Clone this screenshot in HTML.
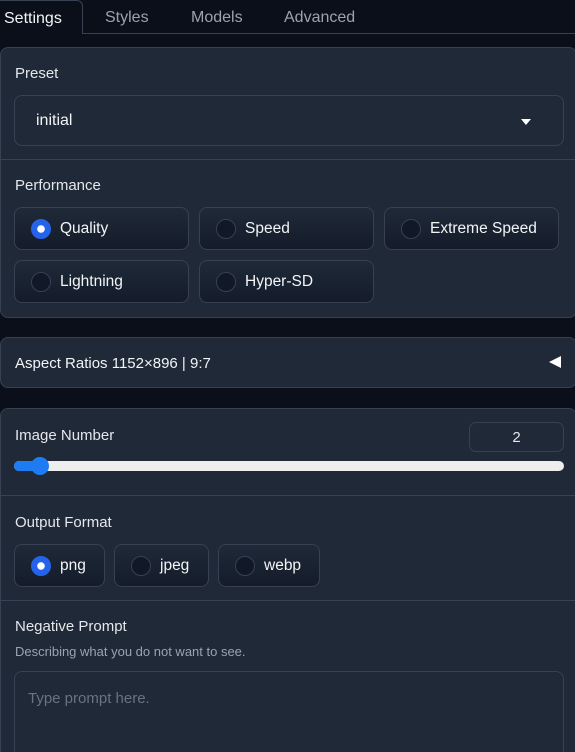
<!DOCTYPE html>
<html style="width:575px;height:752px;overflow:hidden"><head><style>
*{box-sizing:border-box;margin:0;padding:0}
body{width:575px;height:752px;overflow:hidden;background:#0b0f19;font-family:"Liberation Sans",sans-serif;color:#e5e7eb;position:relative}
.a{position:absolute}
.tab{top:0;height:34px;line-height:35px;font-size:16px;color:#9ca3af}
.panel{background:#1f2937;border:1px solid #374151;border-radius:8px}
.lbl{font-size:15px;color:#e5e7eb;margin-top:2px}
.sep{height:1px;background:#374151;left:0;right:0}
.btn{border:1px solid #374151;border-radius:8px;background:linear-gradient(#1f2937,#141c2a);height:43px;font-size:15.5px;color:#f3f4f6;line-height:42px;padding-left:45px}
.btn::before{content:"";position:absolute;left:16px;top:11px;width:18px;height:18px;border-radius:50%;border:1px solid #374151;background:#111827}
.btn.on::before{background:#2563eb;border-color:#2563eb;background-image:radial-gradient(circle,#fff 3.5px,#2563eb 4px)}
</style></head><body>
<div class="a tab" style="left:0;width:83px;color:#f3f4f6;border:1px solid #374151;border-bottom:none;border-left:none;border-radius:0 6px 0 0;background:#0b0f19;padding-left:4px;height:34px;z-index:2">Settings</div>
<div class="a" style="left:83px;right:0;top:33px;height:1px;background:#374151"></div>
<div class="a tab" style="left:105px">Styles</div>
<div class="a tab" style="left:191px">Models</div>
<div class="a tab" style="left:284px">Advanced</div>

<div class="a panel" style="left:0;top:47px;width:577px;height:271px"></div>
<div class="a lbl" style="left:15px;top:63px">Preset</div>
<div class="a" style="left:14px;top:95px;width:550px;height:51px;border:1px solid #374151;border-radius:8px"></div>
<div class="a" style="left:36px;top:112px;font-size:16px;color:#f3f4f6">initial</div>
<div class="a" style="left:521px;top:119px;width:0;height:0;border-left:5px solid transparent;border-right:5px solid transparent;border-top:6px solid #fff"></div>
<div class="a sep" style="top:159px"></div>
<div class="a lbl" style="left:15px;top:175px">Performance</div>
<div class="a btn on" style="left:14px;top:207px;width:175px">Quality</div>
<div class="a btn" style="left:199px;top:207px;width:175px">Speed</div>
<div class="a btn" style="left:384px;top:207px;width:175px">Extreme Speed</div>
<div class="a btn" style="left:14px;top:260px;width:175px">Lightning</div>
<div class="a btn" style="left:199px;top:260px;width:175px">Hyper-SD</div>

<div class="a panel" style="left:0;top:337px;width:577px;height:51px"></div>
<div class="a lbl" style="left:15px;top:353px;color:#f3f4f6">Aspect Ratios 1152×896 | 9:7</div>
<div class="a" style="left:549px;top:356px;width:0;height:0;border-top:6px solid transparent;border-bottom:6px solid transparent;border-right:12px solid #fff"></div>

<div class="a panel" style="left:0;top:408px;width:577px;height:344px;border-bottom:none;border-radius:8px 8px 0 0"></div>
<div class="a lbl" style="left:15px;top:425px">Image Number</div>
<div class="a" style="left:469px;top:422px;width:95px;height:30px;border:1px solid #374151;border-radius:7px;text-align:center;line-height:30px;font-size:15px">2</div>
<div class="a" style="left:14px;top:461px;width:550px;height:10px;border-radius:5px;background:#eeeeee"></div>
<div class="a" style="left:14px;top:461px;width:26px;height:10px;border-radius:5px;background:#1e7cf2"></div>
<div class="a" style="left:31px;top:457px;width:18px;height:18px;border-radius:50%;background:#1e7cf2"></div>
<div class="a sep" style="top:495px"></div>
<div class="a lbl" style="left:15px;top:512px">Output Format</div>
<div class="a btn on" style="left:14px;top:544px;width:91px">png</div>
<div class="a btn" style="left:114px;top:544px;width:95px">jpeg</div>
<div class="a btn" style="left:218px;top:544px;width:102px">webp</div>
<div class="a sep" style="top:600px"></div>
<div class="a lbl" style="left:15px;top:616px">Negative Prompt</div>
<div class="a" style="left:15px;top:644px;font-size:13px;color:#9ca3af">Describing what you do not want to see.</div>
<div class="a" style="left:14px;top:671px;width:550px;height:90px;border:1px solid #374151;border-radius:8px"></div>
<div class="a" style="left:28px;top:690px;font-size:15px;color:#6b7280">Type prompt here.</div>
</body></html>
